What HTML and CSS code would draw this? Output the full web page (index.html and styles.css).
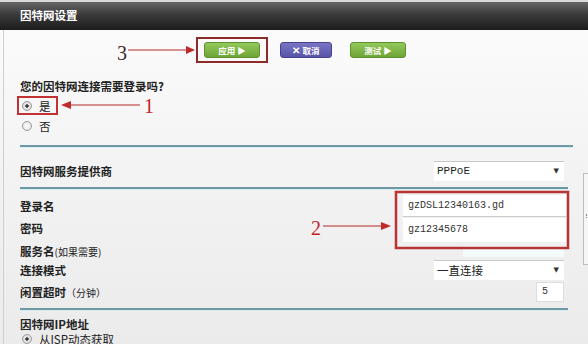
FILE: index.html
```html
<!DOCTYPE html>
<html lang="zh-CN">

<head>
  <meta charset="UTF-8">
  <meta name="viewport" content="width=device-width, initial-scale=1.0">
  <title>因特网设置</title>
  <link rel="stylesheet" href="styles.css">
</head>

<body>

  <div class="page">
    <div class="titlebar">因特网设置</div>

    <div class="body">
      <div class="main">

        <div class="actions">
          <button class="btn btn-green">应用 ▶</button>
          <button class="btn btn-purple"><span class="x">✕</span>取消</button>
          <button class="btn btn-green">测试 ▶</button>
        </div>

        <p class="question">您的因特网连接需要登录吗?</p>
        <label class="radio-row"><span class="radio checked"></span>是</label>
        <label class="radio-row"><span class="radio"></span>否</label>

        <div class="rule"></div>

        <div class="field field-isp">
          <span class="label">因特网服务提供商</span>
          <div class="select">PPPoE<span class="caret">▼</span></div>
        </div>

        <div class="rule rule-short"></div>

        <div class="field field-login">
          <span class="label">登录名</span>
          <div class="input wide">gzDSL12340163.gd</div>
        </div>
        <div class="field field-pw">
          <span class="label">密码</span>
          <div class="input wide">gz12345678</div>
        </div>
        <div class="field field-service">
          <span class="label">服务名<small>(如果需要)</small></span>
          <div class="input ghost"></div>
        </div>
        <div class="field field-mode">
          <span class="label">连接模式</span>
          <div class="select cjk">一直连接<span class="caret">▼</span></div>
        </div>
        <div class="field field-idle">
          <span class="label">闲置超时<small>（分钟）</small></span>
          <div class="input tiny">5</div>
        </div>

        <div class="rule rule-short"></div>

        <p class="section">因特网IP地址</p>
        <label class="radio-row"><span class="radio checked"></span>从ISP动态获取</label>

      </div>

      <div class="aside">
        <div class="help-edge"><span class="grip"></span></div>
      </div>
    </div>

    <!-- annotations drawn on top of the screenshot -->
    <svg class="marks" width="588" height="344" viewBox="0 0 588 344">
      <rect x="197" y="38" width="70" height="24" fill="none" stroke="#8e2a2a" stroke-width="2" />
      <line x1="128" y1="50" x2="187" y2="50" stroke="#b42a2a" stroke-width="1.2" />
      <polygon points="186,46 195,50 186,54" fill="#c02a2a" />
      <text x="117" y="60" class="num num-dark">3</text>

      <rect x="18" y="97" width="39" height="17" fill="none" stroke="#c23232" stroke-width="2" />
      <line x1="70" y1="105" x2="140" y2="105" stroke="#b42a2a" stroke-width="1.2" />
      <polygon points="61,105 71,101 71,109" fill="#c02a2a" />
      <text x="144" y="113" class="num">1</text>

      <rect x="396" y="192" width="172" height="56" fill="none" stroke="#b83434" stroke-width="2.5" />
      <line x1="323" y1="226" x2="382" y2="226" stroke="#b42a2a" stroke-width="1.2" />
      <polygon points="381,222 391,226 381,230" fill="#c02a2a" />
      <text x="311" y="235" class="num">2</text>
    </svg>
  </div>

</body>

</html>
```

FILE: styles.css
```css
* {
  margin: 0;
  padding: 0;
  box-sizing: border-box;
}

body {
  width: 588px;
  height: 344px;
  overflow: hidden;
  font-family: "Noto Sans CJK SC", "Noto Sans", sans-serif;
  color: #222;
  background: #eee;
}

.page {
  position: relative;
  width: 588px;
  height: 344px;
}

.titlebar {
  height: 30px;
  padding-left: 20px;
  border-top: 2px solid #d8d8d8;
  background: linear-gradient(#666, #3a3a3a 45%, #1c1c1c);
  color: #fff;
  font-size: 11.5px;
  font-weight: bold;
  line-height: 27px;
}

.body {
  display: flex;
  height: 314px;
  background: linear-gradient(#fbfbfb, #f3f3f3 45%, #ebebeb);
}

.main {
  flex: 0 0 578px;
  margin-left: 3px;
  border-left: 1px solid #cfcfcf;
  padding-left: 16px;
  padding-right: 17px;
}

.actions {
  display: flex;
  padding-top: 12px;
  padding-left: 184px;
  gap: 20px;
}

.btn {
  height: 16px;
  width: 56px;
  border-radius: 3px;
  color: #fff;
  font-family: inherit;
  font-size: 8.5px;
  font-weight: bold;
  line-height: 14px;
  cursor: pointer;
}

.btn-green {
  background: linear-gradient(#93c85a, #6fa436);
  border: 1px solid #5f8f2e;
}

.btn-purple {
  width: 52px;
  margin-right: -2px;
  background: linear-gradient(#7a74c4, #5a54a8);
  border: 1px solid #48428e;
}

.btn-purple .x {
  font-size: 10px;
  margin-right: 2px;
}

.question {
  margin-top: 21px;
  font-size: 11.5px;
  font-weight: bold;
  line-height: 14px;
}

.radio-row {
  display: flex;
  align-items: center;
  height: 20px;
  padding-left: 2px;
  gap: 7px;
  font-size: 11.5px;
}

.question + .radio-row {
  margin-top: 3px;
}

.radio {
  width: 10px;
  height: 10px;
  border: 1px solid #9a9a9a;
  border-radius: 50%;
  background: radial-gradient(#fff, #dcdcdc);
}

.radio.checked {
  background: radial-gradient(#3a3a3a 25%, #e8e8e8 35%, #cfcfcf);
}

.rule {
  height: 2px;
  margin-top: 9px;
  margin-right: -9px;
  background: #6f98a2;
  box-shadow: 0 1px 0 #d4eef2;
}

.rule-short {
  margin-top: 6px;
  margin-right: -4px;
}

.field {
  display: flex;
  align-items: center;
  justify-content: space-between;
  font-size: 11.5px;
}

.label {
  font-weight: bold;
}

.label small {
  font-size: 10px;
  font-weight: normal;
}

.field-isp {
  margin-top: 14px;
  height: 20px;
}

.field-login {
  margin-top: 6px;
  height: 22px;
}

.field-pw {
  margin-top: 1px;
  height: 24px;
}

.field-pw .label {
  margin-top: -4px;
}

.field-service {
  height: 18px;
}

.field-mode {
  height: 20px;
}

.field-idle {
  margin-top: 2px;
  height: 20px;
}

.select {
  position: relative;
  width: 130px;
  height: 20px;
  padding-left: 3px;
  background: #fff;
  border-top: 1px solid #c8c8c8;
  font-family: "Liberation Mono", monospace;
  font-size: 11px;
  line-height: 19px;
}

.select.cjk {
  font-family: "Noto Sans CJK SC", sans-serif;
  font-size: 11.5px;
}

.select .caret {
  position: absolute;
  right: 5px;
  top: 0;
  font-family: "DejaVu Sans", sans-serif;
  font-size: 7px;
  line-height: 19px;
  color: #333;
}

.input {
  background: #fff;
  font-family: "Liberation Mono", monospace;
  font-size: 10px;
  color: #333;
}

.input.wide {
  width: 163px;
  height: 22px;
  margin-right: -2px;
  padding-left: 5px;
  line-height: 22px;
  border-bottom: 1px solid #ccc;
}

.field-pw .input.wide {
  height: 24px;
  line-height: 24px;
  border-bottom: 0;
}

.input.ghost {
  width: 101px;
  height: 11px;
  background: #f3fbfb;
}

.input.tiny {
  width: 28px;
  height: 20px;
  padding-left: 5px;
  border: 1px solid #ddd;
  line-height: 18px;
}

.section {
  margin-top: 7px;
  font-size: 11.5px;
  font-weight: bold;
  line-height: 14px;
}

.section + .radio-row {
  margin-top: -2px;
}

.aside {
  flex: 1;
  padding-top: 143px;
}

.help-edge {
  height: 92px;
  margin-left: 2px;
  padding-top: 40px;
  padding-left: 2px;
  border: 1px solid #bdbdbd;
  border-right: 0;
  background: #f6f6f6;
}

.help-edge .grip {
  display: block;
  width: 3px;
  height: 4px;
  border-left: 1px dotted #888;
  border-right: 1px dotted #888;
}

.marks {
  position: absolute;
  top: 0;
  left: 0;
  pointer-events: none;
}

.num {
  font-family: "Liberation Serif", serif;
  font-size: 20px;
  fill: #c42424;
}

.num-dark {
  fill: #3a2a2a;
}
```
